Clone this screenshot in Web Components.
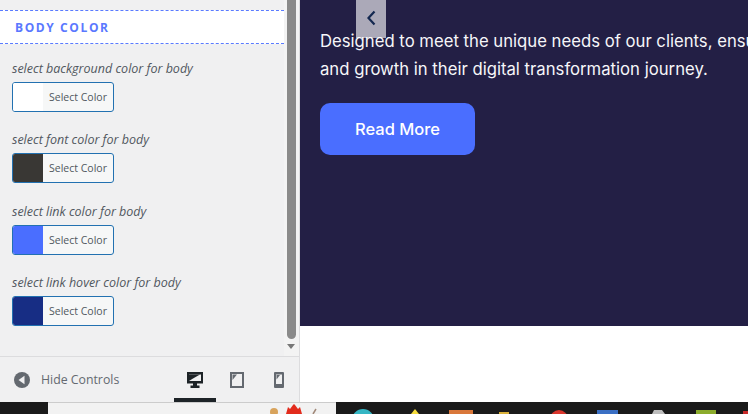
<!DOCTYPE html>
<html>
<head>
<meta charset="utf-8">
<title>Customizer</title>
<style>
html, body { margin:0; padding:0; height:414px; overflow:hidden; background:#fff; }
app-shell { font-family:"Open Sans","Noto Sans",sans-serif; }
</style>
</head>
<body>
<app-shell>
	<customizer-panel slot="side">
		<section-title>BODY COLOR</section-title>
		<color-control label="select background color for body" color="#ffffff"></color-control>
		<color-control label="select font color for body" color="#393734"></color-control>
		<color-control label="select link color for body" color="#4a6eff"></color-control>
		<color-control label="select link hover color for body" color="#172d84"></color-control>
	</customizer-panel>
	<preview-pane slot="main"></preview-pane>
	<task-bar slot="bar"></task-bar>
</app-shell>

<script>
class AppShell extends HTMLElement {
	constructor() {
		super();
		this.attachShadow({mode: 'open'}).innerHTML = `
		<style>
		:host { display:flex; flex-direction:column; width:748px; height:414px; overflow:hidden; }
		.top { display:flex; height:402px; flex:none; }
		.bar { height:12px; flex:none; }
		</style>
		<div class="top"><slot name="side"></slot><slot name="main"></slot></div>
		<div class="bar"><slot name="bar"></slot></div>`;
	}
}

class CustomizerPanel extends HTMLElement {
	constructor() {
		super();
		this.attachShadow({mode: 'open'}).innerHTML = `
		<style>
		:host { display:flex; flex-direction:column; width:299px; height:402px; flex:none; background:#f0f0f1; border-right:1px solid #dcdcde; }
		.scroll { display:flex; height:357px; flex:none; border-bottom:1px solid #dcdcde; box-sizing:border-box; }
		.content { flex:1; min-width:0; padding-top:10px; display:flex; flex-direction:column; }
		.track { width:15px; flex:none; background:#f3f3f3; display:flex; flex-direction:column; }
		.thumb { width:9px; height:339px; margin-left:3px; background:#8a8a8a; border-radius:0 0 5px 5px; }
		.arrow { margin:5px 0 0 3px; width:0; height:0; border:4.5px solid transparent; border-top:5px solid #777; border-bottom:0; }
		.foot { flex:1; display:flex; align-items:center; position:relative; padding-left:14px; color:#646970; font-size:12.300px; }
		.hide { width:16px; height:16px; margin-right:11px; flex:none; }
		.devices { position:absolute; left:174px; top:0; display:flex; height:45px; }
		.dev { width:42px; display:flex; align-items:center; justify-content:center; box-sizing:border-box; }
		.dev.on { border-bottom:4px solid #1d2327; padding-top:4px; }
		</style>
		<div class="scroll">
			<div class="content"><slot></slot></div>
			<div class="track"><div class="thumb"></div><div class="arrow"></div></div>
		</div>
		<div class="foot">
			<svg class="hide" viewBox="0 0 16 16"><circle cx="8" cy="8" r="8" fill="#646970"/><path d="M10.500 3.800v8.400L4.500 8z" fill="#f0f0f1"/></svg>
			<span>Hide Controls</span>
			<div class="devices">
				<div class="dev on"><svg width="16" height="16" viewBox="0 0 16 16"><path d="M0 0h16v11.500H10v2h2.500V16h-9v-2.500H6v-2H0zM2 2.500v6.500h12V2.500z" fill="#1d2327"/><path d="M2 2.500h11L6 6.500 2 9z" fill="#1d2327"/></svg></div>
				<div class="dev"><svg width="14" height="16" viewBox="0 0 14 16"><path d="M0 0h14v16H0zM2 2v12h10V2z" fill="#646970"/><path d="M2.500 2.500H7L2.500 8z" fill="#646970"/></svg></div>
				<div class="dev"><svg width="10" height="16" viewBox="0 0 10 16"><path d="M1 0h8a1 1 0 0 1 1 1v14a1 1 0 0 1-1 1H1a1 1 0 0 1-1-1V1a1 1 0 0 1 1-1zM2 2.500V12h6V2.500z" fill="#646970"/><path d="M2.500 3H6L2.500 7.500z" fill="#646970"/></svg></div>
			</div>
		</div>`;
	}
}

class SectionTitle extends HTMLElement {
	constructor() {
		super();
		this.attachShadow({mode: 'open'}).innerHTML = `
		<style>
		:host { display:flex; align-items:center; height:34px; box-sizing:border-box; margin-bottom:16px; padding-left:15px; background:#fff;
			border-top:1px dashed #5a7bff; border-bottom:1px dashed #5a7bff;
			color:#5a78ff; font-size:12px; font-weight:700; letter-spacing:1.600px; }
		</style>
		<slot></slot>`;
	}
}

class ColorControl extends HTMLElement {
	constructor() {
		super();
		this.attachShadow({mode: 'open'}).innerHTML = `
		<style>
		:host { display:block; padding-left:12px; margin-bottom:19.330px; }
		.label { font-size:12.500px; font-style:italic; color:#50575e; line-height:18px; margin-bottom:4px; }
		.btn { display:flex; width:102px; height:30px; box-sizing:border-box; border:1px solid #2271b1; border-radius:3px; background:#f6f7f7; overflow:hidden; }
		.swatch { width:30px; flex:none; }
		.txt { flex:1; text-align:center; font-size:10.500px; line-height:28px; color:#50575e; }
		</style>
		<div class="label"></div>
		<div class="btn"><div class="swatch"></div><div class="txt">Select Color</div></div>`;
	}

	connectedCallback() {
		this.shadowRoot.querySelector('.label').textContent = this.getAttribute('label');
		this.shadowRoot.querySelector('.swatch').style.background = this.getAttribute('color');
	}
}

class PreviewPane extends HTMLElement {
	constructor() {
		super();
		this.attachShadow({mode: 'open'}).innerHTML = `
		<style>
		:host { display:block; flex:1; min-width:0; position:relative; overflow:hidden; background:#fff; font-family:Inter,Lato,sans-serif; }
		.hero { height:326px; box-sizing:border-box; background:#231f45; padding:27px 0 0 20px; color:#f6f6f9; }
		p { margin:0 0 20px; font-size:16.700px; line-height:28px; white-space:nowrap; }
		.more { display:flex; align-items:center; justify-content:center; width:155px; height:52px; border-radius:10px; background:#4a6eff; color:#fff; font-size:16.500px; font-weight:500; }
		.tab { position:absolute; left:56px; top:0; width:30px; height:38px; padding-bottom:3px; box-sizing:border-box; background:rgba(255,255,255,.62); display:flex; align-items:center; justify-content:center; }
		</style>
		<div class="hero">
			<p>Designed to meet the unique needs of our clients, ensuring success<br>and growth in their digital transformation journey.</p>
			<div class="more">Read More</div>
		</div>
		<div class="tab"><svg width="10" height="16" viewBox="0 0 10 16"><path d="M8.500 1.500 2.500 8l6 6.500" fill="none" stroke="#142850" stroke-width="2.200"/></svg></div>`;
	}
}

class TaskBar extends HTMLElement {
	constructor() {
		super();
		this.attachShadow({mode: 'open'}).innerHTML = `
		<style>
		:host { display:flex; height:12px; background:#1a1a1a; overflow:hidden; }
		.search { width:288px; margin-left:48px; flex:none; background:#f2f2f2; border-top:1px solid #ccc; box-sizing:border-box; position:relative; }
		.search svg { position:absolute; left:222px; top:-1px; }
		.icons { position:relative; flex:1; }
		.icons svg { position:absolute; left:0; top:0; }
		</style>
		<div class="search">
			<svg width="50" height="12" viewBox="0 0 50 12"><circle cx="4" cy="10" r="4" fill="#d8a35c"/><path d="M16 12l2-7 2 2 3-4 1-1 1 1 3 4 2-2 2 7z" fill="#e22b1c"/><path d="M43 12l3-5" stroke="#a08878" stroke-width="1.500"/></svg>
		</div>
		<div class="icons">
			<svg width="412" height="12" viewBox="0 0 412 12">
				<circle cx="27" cy="18" r="11" fill="#35b6c4"/>
				<path d="M79 7l4 5h-8z" fill="#f5dc3c"/>
				<rect x="113" y="8" width="24" height="4" fill="#d9773a"/>
				<rect x="163" y="10" width="10" height="2" fill="#d9b13a"/>
				<circle cx="223" cy="17" r="9" fill="#d9352c"/>
				<rect x="261" y="8" width="21" height="4" fill="#3a6fc4"/>
				<path d="M318 8h8l3 4h-13z" fill="#bdbdbd"/>
				<rect x="360" y="8" width="20" height="4" fill="#8bab2c"/>
				<rect x="407" y="9" width="5" height="3" fill="#c92a2a"/>
			</svg>
		</div>`;
	}
}

customElements.define('app-shell', AppShell);
customElements.define('customizer-panel', CustomizerPanel);
customElements.define('section-title', SectionTitle);
customElements.define('color-control', ColorControl);
customElements.define('preview-pane', PreviewPane);
customElements.define('task-bar', TaskBar);
</script>
</body>
</html>
